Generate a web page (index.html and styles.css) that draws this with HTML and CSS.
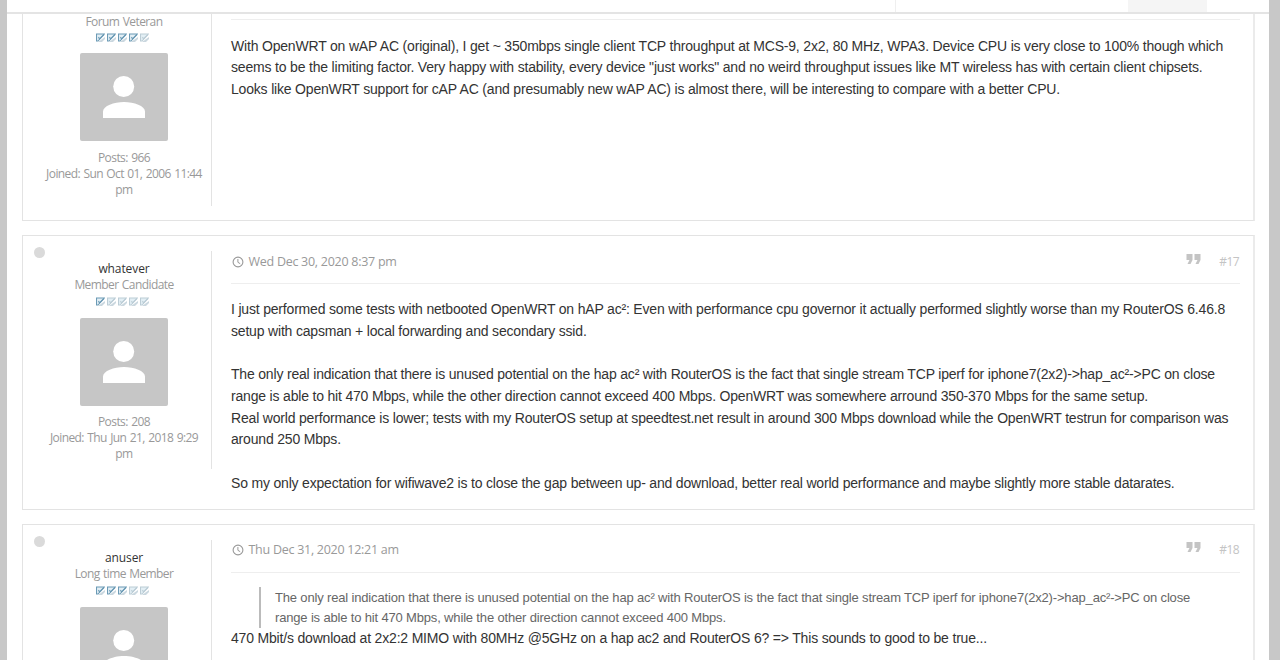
FILE: index.html
```
<!DOCTYPE html>
<html lang="en">
<head>
  <meta charset="UTF-8">
  <title>Forum topic</title>
  <link rel="stylesheet" href="styles.css">
</head>
<body>
  <!-- Shared icons -->
  <svg class="defs">
    <symbol id="person" viewBox="0 0 88 88">
      <circle cx="43.7" cy="33.5" r="10.5"/>
      <path d="M23 65V58.5C23 53 34 49 44 49S65 53 65 58.5V65Z"/>
    </symbol>
    <symbol id="clock" viewBox="0 0 12 12">
      <circle cx="6" cy="6" r="4.9" fill="none" stroke="currentColor" stroke-width="1.1"/>
      <path d="M5.9 3V6.3L8.2 7.7" fill="none" stroke="currentColor"/>
    </symbol>
    <symbol id="quote" viewBox="0 0 14 10">
      <path d="M0 0H6V6L4 10H1L3 6H0ZM8 0H14V6L12 10H9L11 6H8Z"/>
    </symbol>
    <symbol id="pip" viewBox="0 0 9 9">
      <path d="M2 9L9 4V6L6 9Z" fill="#cad7df"/>
      <path d="M.5 1H8.3L2 8H.5Z" fill="#e3eff5" stroke="currentColor" stroke-width="1.1"/>
      <path d="M2.5 4L3.5 6L8 1.5" fill="none" stroke="currentColor" stroke-width="1.1"/>
    </symbol>
  </svg>

  <div class="wrap">
    <div class="topbar">
      <div class="nav"></div>
      <div class="tab"></div>
    </div>

    <div class="post first">
      <div class="profile">
        <div>Forum Veteran</div>
        <div class="rank">
          <svg class="on"><use href="#pip"/></svg><svg class="on"><use href="#pip"/></svg><svg class="on"><use href="#pip"/></svg><svg class="on"><use href="#pip"/></svg><svg><use href="#pip"/></svg>
        </div>
        <svg class="avatar"><use href="#person"/></svg>
        <div>Posts: 966</div>
        <div class="joined">Joined: Sun Oct 01, 2006 11:44<br>pm</div>
      </div>
      <div class="content">
        <div class="post-head"></div>
        <div class="text">
          With OpenWRT on wAP AC (original), I get ~ 350mbps single client TCP throughput at MCS-9, 2x2, 80 MHz, WPA3. Device CPU is very close to 100% though which<br>
          seems to be the limiting factor. Very happy with stability, every device "just works" and no weird throughput issues like MT wireless has with certain client chipsets.<br>
          Looks like OpenWRT support for cAP AC (and presumably new wAP AC) is almost there, will be interesting to compare with a better CPU.
        </div>
      </div>
    </div>

    <div class="post second">
      <div class="status"></div>
      <div class="profile">
        <div class="username">whatever</div>
        <div>Member Candidate</div>
        <div class="rank">
          <svg class="on"><use href="#pip"/></svg><svg><use href="#pip"/></svg><svg><use href="#pip"/></svg><svg><use href="#pip"/></svg><svg><use href="#pip"/></svg>
        </div>
        <svg class="avatar"><use href="#person"/></svg>
        <div>Posts: 208</div>
        <div class="joined">Joined: Thu Jun 21, 2018 9:29<br>pm</div>
      </div>
      <div class="content">
        <div class="post-head">
          <svg class="clock"><use href="#clock"/></svg>
          <span class="date">Wed Dec 30, 2020 8:37 pm</span>
          <svg class="quote-btn"><use href="#quote"/></svg>
          <span class="num">#17</span>
        </div>
        <div class="text">
          I just performed some tests with netbooted OpenWRT on hAP ac²: Even with performance cpu governor it actually performed slightly worse than my RouterOS 6.46.8<br>
          setup with capsman + local forwarding and secondary ssid.<br>
          <br>
          The only real indication that there is unused potential on the hap ac² with RouterOS is the fact that single stream TCP iperf for iphone7(2x2)-&gt;hap_ac²-&gt;PC on close<br>
          range is able to hit 470 Mbps, while the other direction cannot exceed 400 Mbps. OpenWRT was somewhere arround 350-370 Mbps for the same setup.<br>
          Real world performance is lower; tests with my RouterOS setup at speedtest.net result in around 300 Mbps download while the OpenWRT testrun for comparison was<br>
          around 250 Mbps.<br>
          <br>
          So my only expectation for wifiwave2 is to close the gap between up- and download, better real world performance and maybe slightly more stable datarates.
        </div>
      </div>
    </div>

    <div class="post third">
      <div class="status"></div>
      <div class="profile">
        <div class="username">anuser</div>
        <div>Long time Member</div>
        <div class="rank">
          <svg class="on"><use href="#pip"/></svg><svg class="on"><use href="#pip"/></svg><svg class="on"><use href="#pip"/></svg><svg><use href="#pip"/></svg><svg><use href="#pip"/></svg>
        </div>
        <svg class="avatar"><use href="#person"/></svg>
      </div>
      <div class="content">
        <div class="post-head">
          <svg class="clock"><use href="#clock"/></svg>
          <span class="date">Thu Dec 31, 2020 12:21 am</span>
          <svg class="quote-btn"><use href="#quote"/></svg>
          <span class="num">#18</span>
        </div>
        <div class="text">
          <blockquote>
            The only real indication that there is unused potential on the hap ac² with RouterOS is the fact that single stream TCP iperf for iphone7(2x2)-&gt;hap_ac²-&gt;PC on close<br>
            range is able to hit 470 Mbps, while the other direction cannot exceed 400 Mbps.
          </blockquote>
          470 Mbit/s download at 2x2:2 MIMO with 80MHz @5GHz on a hap ac2 and RouterOS 6? =&gt; This sounds to good to be true...
        </div>
      </div>
    </div>
  </div>
</body>
</html>
```
FILE: styles.css
```
:root {
  --bg: #c8c8c8;
  --border: #e3e3e3;
  --muted: #999;
  --text: #333;
}
* { box-sizing: border-box; margin: 0; padding: 0; }
body {
  height: 660px;
  overflow: hidden;
  background: var(--bg);
  color: var(--text);
  font-family: "Open Sans", "Noto Sans", sans-serif;
}
.defs { display: none; }
svg { display: block; fill: currentColor; }

.wrap {
  width: 1262px; height: 660px;
  margin-left: 7px;
  background: #fff;
  overflow: hidden;
}

/* Bottom edge of the fixed header */
.topbar {
  display: flex; height: 14px;
  border-bottom: 2px solid #e4e4e4;
}
.nav { width: 889px; border-right: 1px solid #efefef; }
.tab { width: 79px; margin-left: 232px; background: #f5f5f5; }

.post {
  position: relative;
  display: flex; align-items: flex-start;
  width: 1233px;
  margin: 0 0 14px 15px;
  padding: 16px 14px 0 0;
  border: 1px solid var(--border);
  border-right: 2px solid #ebebeb;
}
.first { height: 207px; padding-top: 0; border-top: none; }
.second { height: 275px; }
.third { height: 300px; }

.status {
  position: absolute; left: 11px; top: 11px;
  width: 11px; height: 11px;
  border-radius: 50%; background: #dadada;
}

.profile {
  width: 189px; height: 218px;
  padding: 9px 0 0 14px;
  border-right: 1px solid var(--border);
  text-align: center; color: var(--muted);
  font-size: 12px; line-height: 16.3px;
  letter-spacing: -.58px; word-spacing: .8px;
  white-space: nowrap;
}
.second .profile, .third .profile { margin-top: -1px; padding-top: 10px; }
.first .profile { height: 192px; padding-top: 0; }
.first .avatar { margin-top: 11px; margin-bottom: 9px; }
.first .joined { margin-top: -.5px; }
.username { color: #333; letter-spacing: -.1px; }
.rank { display: flex; gap: 2.2px; width: 57px; height: 9px; margin: 3px auto 0; }
.rank svg { width: 9px; height: 9px; color: #bccdd6; }
.rank svg.on { color: #6b9ab5; }
.avatar {
  width: 88px; height: 88px;
  margin: 12px auto 8px;
  border-radius: 2px;
  background: #c6c6c6; color: #fff;
}

.content { flex: 1; min-width: 0; margin-left: 19px; }
.post-head {
  display: flex; align-items: center;
  height: 32px; padding-bottom: 12px;
  margin-right: -1px;
  border-bottom: 1px solid #eee;
  color: var(--muted);
  font-size: 12.5px; letter-spacing: -.27px;
}
.first .post-head { height: 6px; padding: 0; }
.third .post-head { padding-bottom: 14px; }
.clock { width: 12px; height: 12px; margin-left: .5px; }
.date { margin-left: 5px; }
.quote-btn { width: 15px; height: 10px; margin: -5px 18px 0 auto; color: #c4c4c4; }
.num { margin-right: 1px; color: #c4c4c4; font-size: 12px; letter-spacing: -.6px; }

.text {
  margin-top: 15px;
  font: 14px/21.7px "Liberation Sans", Arial, sans-serif;
  letter-spacing: -.185px;
  white-space: nowrap;
}
.first .text { margin-top: 15.6px; }
.third .text { margin-top: 14px; }
blockquote {
  margin: 0 0 0 28px;
  padding: 1px 0 0 14px;
  border-left: 2px solid #bbb;
  color: #666;
  font-size: 13px; line-height: 20px;
  letter-spacing: -.163px;
}
```
